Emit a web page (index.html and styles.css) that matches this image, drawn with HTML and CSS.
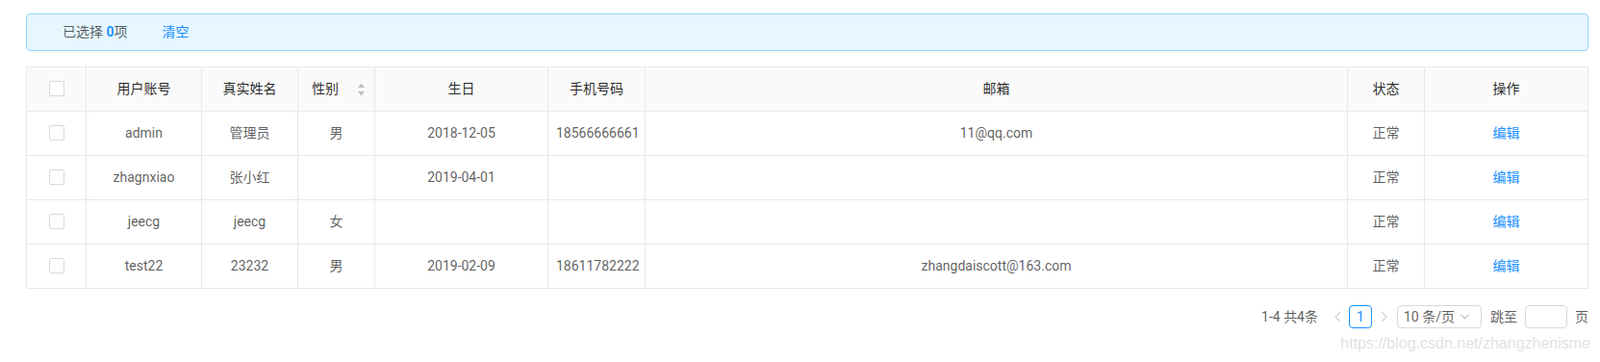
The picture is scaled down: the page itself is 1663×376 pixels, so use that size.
FILE: index.html
```html
<!DOCTYPE html>
<html lang="zh">
<head>
    <meta charset="UTF-8">
    <meta name="viewport" content="width=device-width, initial-scale=1.0">
    <title>用户列表</title>
    <link rel="stylesheet" href="styles.css">
</head>
<body>
    <div class="page">
        <!-- 已选择提示 -->
        <div class="alert">
            <span>已选择 <a class="count">0</a>项</span>
            <a class="clear">清空</a>
        </div>

        <table class="user-table">
            <colgroup>
                <col style="width: 62px">
                <col style="width: 120px">
                <col style="width: 100px">
                <col style="width: 80px">
                <col style="width: 180px">
                <col style="width: 101px">
                <col style="width: 730px">
                <col style="width: 80px">
                <col style="width: 170px">
            </colgroup>
            <thead>
                <tr>
                    <th><span class="checkbox"></span></th>
                    <th>用户账号</th>
                    <th>真实姓名</th>
                    <th class="sortable">
                        <div class="sorter">
                            <span class="sorter-title">性别</span>
                            <span class="sorter-icon">
                                <svg width="7" height="14" viewBox="0 0 7 14">
                                    <path d="M3.5 0.5 L7 5 L0 5 Z" fill="#bfbfbf"/>
                                    <path d="M0 9 L7 9 L3.5 13.5 Z" fill="#bfbfbf"/>
                                </svg>
                            </span>
                        </div>
                    </th>
                    <th>生日</th>
                    <th>手机号码</th>
                    <th>邮箱</th>
                    <th>状态</th>
                    <th>操作</th>
                </tr>
            </thead>
            <tbody>
                <tr>
                    <td><span class="checkbox"></span></td>
                    <td>admin</td>
                    <td>管理员</td>
                    <td>男</td>
                    <td>2018-12-05</td>
                    <td>18566666661</td>
                    <td>11@qq.com</td>
                    <td>正常</td>
                    <td><a class="link">编辑</a></td>
                </tr>
                <tr>
                    <td><span class="checkbox"></span></td>
                    <td>zhagnxiao</td>
                    <td>张小红</td>
                    <td></td>
                    <td>2019-04-01</td>
                    <td></td>
                    <td></td>
                    <td>正常</td>
                    <td><a class="link">编辑</a></td>
                </tr>
                <tr>
                    <td><span class="checkbox"></span></td>
                    <td>jeecg</td>
                    <td>jeecg</td>
                    <td>女</td>
                    <td></td>
                    <td></td>
                    <td></td>
                    <td>正常</td>
                    <td><a class="link">编辑</a></td>
                </tr>
                <tr>
                    <td><span class="checkbox"></span></td>
                    <td>test22</td>
                    <td>23232</td>
                    <td>男</td>
                    <td>2019-02-09</td>
                    <td>18611782222</td>
                    <td>zhangdaiscott@163.com</td>
                    <td>正常</td>
                    <td><a class="link">编辑</a></td>
                </tr>
            </tbody>
        </table>

        <!-- 分页 -->
        <div class="pagination">
            <span class="total">1-4 共4条</span>
            <span class="pager-arrow">
                <svg width="7" height="12" viewBox="0 0 7 12"><path d="M6 1 L1 6 L6 11" fill="none" stroke="#d0d0d0" stroke-width="1.2"/></svg>
            </span>
            <span class="page-item active">1</span>
            <span class="pager-arrow">
                <svg width="7" height="12" viewBox="0 0 7 12"><path d="M1 1 L6 6 L1 11" fill="none" stroke="#d0d0d0" stroke-width="1.2"/></svg>
            </span>
            <div class="size-select">
                <span>10 条/页</span>
                <svg width="9" height="6" viewBox="0 0 9 6"><path d="M0.5 0.8 L4.5 5 L8.5 0.8" fill="none" stroke="#bfbfbf" stroke-width="1.1"/></svg>
            </div>
            <div class="jumper">
                跳至
                <span class="jump-input"></span>
                页
            </div>
        </div>
    </div>

    <div class="watermark">https://blog.csdn.net/zhangzhenisme</div>
</body>
</html>
```

FILE: styles.css
```css
body {
    margin: 0;
    font-family: Roboto, "Noto Sans CJK SC", sans-serif;
    font-size: 14px;
    color: rgba(0, 0, 0, 0.65);
    background: #fff;
    position: relative;
    min-height: 376px;
}
.page {
    padding: 14px 12px 0 27px;
}
a {
    cursor: pointer;
}
/* 已选择提示 */
.alert {
    display: flex;
    align-items: center;
    height: 37px;
    padding: 0 15px 0 37px;
    background-color: #e6f7ff;
    border: 1px solid #91d5ff;
    border-radius: 4px;
    line-height: 21px;
    margin-bottom: 16px;
}
.alert .count {
    color: #1890ff;
    font-weight: 600;
}
.alert .clear {
    color: #1890ff;
    margin-left: 36px;
}
/* 表格 */
.user-table {
    width: 1624px;
    table-layout: fixed;
    border-collapse: separate;
    border-spacing: 0;
    border-top: 1px solid #e8e8e8;
    border-left: 1px solid #e8e8e8;
}
.user-table th,
.user-table td {
    padding: 12px 8px;
    height: 21px;
    line-height: 21px;
    text-align: center;
    border-right: 1px solid #e8e8e8;
    border-bottom: 1px solid #e8e8e8;
    white-space: nowrap;
}
.user-table th {
    background-color: #fafafa;
    color: rgba(0, 0, 0, 0.85);
    font-weight: normal;
}
.user-table th.sortable {
    padding-right: 10px;
}
.sorter {
    display: flex;
    align-items: center;
}
.sorter-title {
    flex: 1;
    text-align: center;
    margin-right: 14px;
}
.sorter-icon {
    display: flex;
    width: 7px;
}
.checkbox {
    display: inline-block;
    width: 14px;
    height: 14px;
    border: 1px solid #d9d9d9;
    border-radius: 2px;
    background: #fff;
    vertical-align: middle;
    margin-top: -3px;
}
.link {
    color: #1890ff;
}
/* 分页 */
.pagination {
    display: flex;
    justify-content: flex-end;
    align-items: center;
    margin-top: 17px;
    height: 24px;
    line-height: 24px;
}
.total {
    margin-right: 8px;
}
.pager-arrow {
    width: 24px;
    height: 24px;
    display: flex;
    align-items: center;
    justify-content: center;
}
.page-item {
    box-sizing: border-box;
    width: 24px;
    height: 24px;
    line-height: 22px;
    text-align: center;
    border: 1px solid #1890ff;
    border-radius: 4px;
    color: #1890ff;
}
.size-select {
    box-sizing: border-box;
    width: 88px;
    height: 24px;
    margin-left: 2px;
    padding: 0 12px 0 6px;
    border: 1px solid #d9d9d9;
    border-radius: 4px;
    display: flex;
    align-items: center;
    justify-content: space-between;
    line-height: 22px;
}
.jumper {
    margin-left: 9px;
    display: flex;
    align-items: center;
}
.jump-input {
    box-sizing: border-box;
    width: 44px;
    height: 24px;
    margin: 0 8px;
    border: 1px solid #d9d9d9;
    border-radius: 4px;
}
/* 水印 */
.watermark {
    position: absolute;
    top: 348px;
    right: 10px;
    font-family: "Liberation Sans", sans-serif;
    font-size: 16px;
    line-height: 18px;
    color: #e2e2e2;
}
```
